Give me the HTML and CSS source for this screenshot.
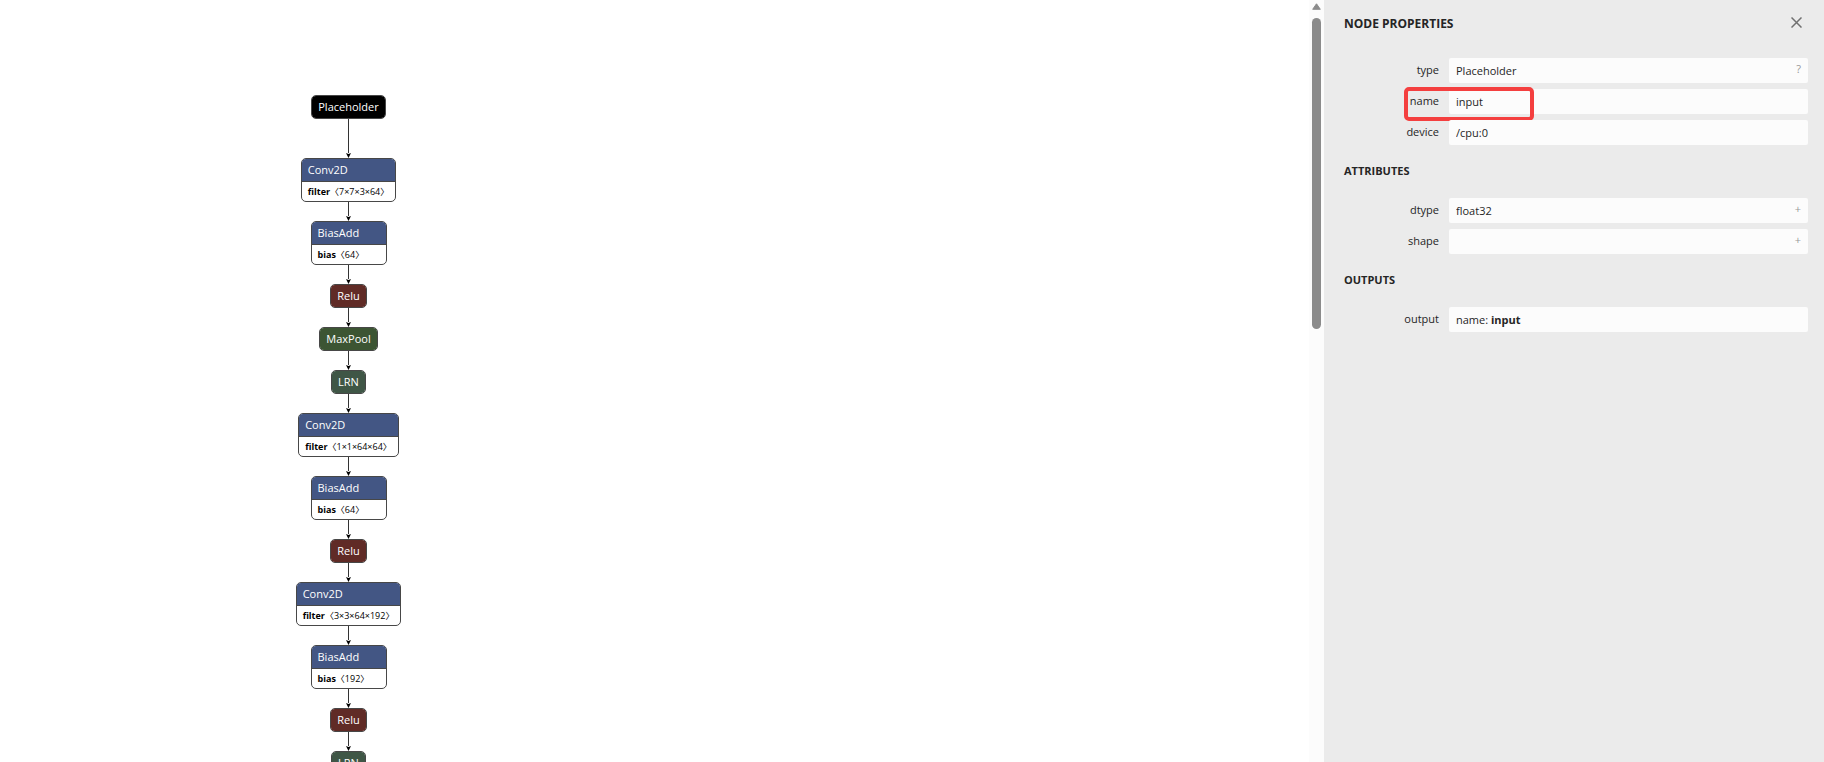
FILE: index.html
```html
<!DOCTYPE html>
<html lang="en">
  <head>
    <meta charset="UTF-8" />
    <meta name="viewport" content="width=device-width, initial-scale=1.0" />
    <title>Node Properties</title>
    <link rel="stylesheet" href="styles.css" />
  </head>
  <body>
    <main class="target">
      <div class="graph"></div>
    </main>

    <div class="scrollbar" aria-hidden="true">
      <svg class="scrollbar__arrow" width="9" height="7" viewBox="0 0 9 7">
        <path d="M4.5 0.8 L8.3 6.3 H0.7 Z" />
      </svg>
      <div class="scrollbar__thumb"></div>
    </div>

    <aside class="sidebar">
      <header class="sidebar__header">
        <h1 class="sidebar__title">NODE PROPERTIES</h1>
        <button class="sidebar__close" aria-label="Close">
          <svg width="11" height="11" viewBox="0 0 11 11">
            <path d="M0.5 0.5 L10.5 10.5 M10.5 0.5 L0.5 10.5" />
          </svg>
        </button>
      </header>

      <section class="group">
        <div class="item">
          <label class="item__name" for="type">type</label>
          <div class="item__value">
            <input id="type" type="text" value="Placeholder" readonly />
            <button class="item__expander" aria-label="Documentation">?</button>
          </div>
        </div>
        <div class="item">
          <label class="item__name" for="name">name</label>
          <div class="item__value">
            <input id="name" type="text" value="input" readonly />
          </div>
          <div class="marker"></div>
        </div>
        <div class="item">
          <label class="item__name" for="device">device</label>
          <div class="item__value">
            <input id="device" type="text" value="/cpu:0" readonly />
          </div>
        </div>
      </section>

      <h2 class="sidebar__subtitle">ATTRIBUTES</h2>
      <section class="group">
        <div class="item">
          <label class="item__name" for="dtype">dtype</label>
          <div class="item__value">
            <input id="dtype" type="text" value="float32" readonly />
            <button class="item__expander" aria-label="Expand dtype">+</button>
          </div>
        </div>
        <div class="item">
          <label class="item__name" for="shape">shape</label>
          <div class="item__value">
            <input id="shape" type="text" value="" readonly />
            <button class="item__expander" aria-label="Expand shape">+</button>
          </div>
        </div>
      </section>

      <h2 class="sidebar__subtitle">OUTPUTS</h2>
      <section class="group">
        <div class="item">
          <span class="item__name">output</span>
          <div class="item__value">
            <p class="item__text">name: <b>input</b></p>
          </div>
        </div>
      </section>
    </aside>

    <script src="script.js"></script>
  </body>
</html>
```
FILE: styles.css
```css
* {
  margin: 0;
  padding: 0;
  box-sizing: border-box;
}

body {
  display: flex;
  height: 100vh;
  overflow: hidden;
  font-family: 'Open Sans', 'Noto Sans CJK SC', sans-serif;
  font-size: 11px;
  line-height: 16px;
  color: #252525;
  background-color: #fff;
}

button,
input {
  font: inherit;
  color: inherit;
  border: none;
  background: none;
}

button {
  cursor: pointer;
}

/* graph */
.target {
  flex: 1;
  min-width: 0;
  overflow: hidden;
  padding: 95px 0 0 296px;
}

.graph {
  display: flex;
  flex-flow: column;
  align-items: center;
  width: 105px;
}

.node {
  flex: none;
  overflow: hidden;
  min-width: 35px;
  border: 1px solid #474747;
  border-radius: 5px;
  background-color: #fff;
  color: #000;
  white-space: nowrap;
}

.node--layer {
  min-width: 76px;
}

.node__type {
  height: 22px;
  padding: 0 6px;
  line-height: 22px;
  color: #fff;
}

.node__param {
  height: 20px;
  padding: 0 6px;
  border-top: 1px solid #474747;
  font-size: 9px;
  line-height: 19px;
}

.node--input .node__type {
  background-color: #000;
}

.node--layer .node__type {
  background-color: #435684;
}

.node--activation .node__type {
  background-color: #602b26;
}

.node--pool .node__type {
  background-color: #3c5533;
}

.node--normalization .node__type {
  background-color: #3f5646;
}

.edge {
  display: flex;
  flex: none;
  flex-flow: column;
  align-items: center;
  width: 5px;
  height: 19px;
}

.edge--long {
  height: 39px;
}

.edge__line {
  flex: 1;
  width: 1px;
  background-color: #333;
}

.edge__head {
  display: block;
  flex: none;
}

/* scrollbar */
.scrollbar {
  display: flex;
  flex: none;
  flex-flow: column;
  align-items: center;
  gap: 8px;
  width: 15px;
  padding-top: 3px;
  background-color: #fcfcfc;
}

.scrollbar__arrow {
  flex: none;
  fill: #8b8b8b;
  stroke: #8b8b8b;
  stroke-linejoin: round;
}

.scrollbar__thumb {
  width: 9px;
  height: 41%;
  border-radius: 5px;
  background-color: #8b8b8b;
}

/* sidebar */
.sidebar {
  flex: none;
  width: 500px;
  padding: 16px 16px 0 20px;
  background-color: #ebebeb;
}

.sidebar__header {
  display: flex;
  align-items: flex-start;
  justify-content: space-between;
  height: 16px;
  margin-bottom: 26px;
}

.sidebar__title {
  font-size: 12px;
  font-weight: 700;
}

.sidebar__close {
  padding: 1px 6px 0;
  line-height: 0;
}

.sidebar__close path {
  fill: none;
  stroke: #707070;
  stroke-width: 1.5;
}

.sidebar__subtitle {
  margin: 18px 0 19px;
  font-size: 11px;
  font-weight: 700;
}

.group {
  display: flex;
  flex-flow: column;
  gap: 6px;
}

.item {
  position: relative;
  display: flex;
  gap: 10px;
}

.item__name {
  width: 95px;
  line-height: 24px;
  text-align: right;
}

.item__value {
  display: flex;
  flex: 1;
  min-width: 0;
  height: 25px;
  padding: 0 7px;
  border-radius: 2px;
  background-color: #fcfcfc;
}

.item__value input {
  flex: 1;
  min-width: 0;
  outline: none;
}

.item__text {
  line-height: 25px;
}

.item__expander {
  font-size: 11px;
  line-height: 20px;
  height: 22px;
  color: #999;
}

/* highlight around the node name */
.marker {
  position: absolute;
  top: -2px;
  left: 60px;
  width: 130px;
  height: 34px;
  border: 4px solid #f43f3f;
  border-radius: 5px;
}
```
FILE: script.js
```js
'use strict';

const graph = document.querySelector('.graph');

const nodes = [
  { type: 'Placeholder', kind: 'input' },
  { type: 'Conv2D', kind: 'layer', param: 'filter', shape: '7×7×3×64' },
  { type: 'BiasAdd', kind: 'layer', param: 'bias', shape: '64' },
  { type: 'Relu', kind: 'activation' },
  { type: 'MaxPool', kind: 'pool' },
  { type: 'LRN', kind: 'normalization' },
  { type: 'Conv2D', kind: 'layer', param: 'filter', shape: '1×1×64×64' },
  { type: 'BiasAdd', kind: 'layer', param: 'bias', shape: '64' },
  { type: 'Relu', kind: 'activation' },
  { type: 'Conv2D', kind: 'layer', param: 'filter', shape: '3×3×64×192' },
  { type: 'BiasAdd', kind: 'layer', param: 'bias', shape: '192' },
  { type: 'Relu', kind: 'activation' },
  { type: 'LRN', kind: 'normalization' },
];

const renderEdge = function (long) {
  return `<div class="edge ${long ? 'edge--long' : ''}">
      <div class="edge__line"></div>
      <svg class="edge__head" width="5" height="5" viewBox="0 0 5 5">
        <path d="M0 0 L2.5 1 L5 0 L2.5 5 Z" />
      </svg>
    </div>`;
};

const renderNode = function (node) {
  const param = node.param
    ? `<div class="node__param"><b>${node.param}</b>〈${node.shape}〉</div>`
    : '';
  return `<div class="node node--${node.kind}">
      <div class="node__type">${node.type}</div>${param}
    </div>`;
};

nodes.forEach(function (node, i) {
  // the input node sits further away from the first layer
  const html = (i > 0 ? renderEdge(i === 1) : '') + renderNode(node);
  graph.insertAdjacentHTML('beforeend', html);
});
```
